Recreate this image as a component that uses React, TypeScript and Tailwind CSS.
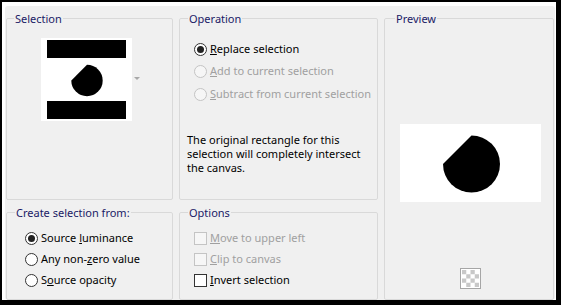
import React from "react";

function Group({
  title,
  titleClass,
  className,
  children,
}: {
  title: string;
  titleClass: string;
  className: string;
  children?: React.ReactNode;
}) {
  return (
    <div className={`relative border border-[#d9d9d9] rounded-[2px] ${className}`}>
      <span
        className={`absolute -top-[8px] ${titleClass} bg-[#f0f0f0] px-[1px] leading-[16px] text-[#1a1a66] whitespace-nowrap`}
      >
        {title}
      </span>
      {children}
    </div>
  );
}

function Radio({ checked, disabled }: { checked?: boolean; disabled?: boolean }) {
  return (
    <span
      className={`w-[13px] h-[13px] shrink-0 rounded-full border flex items-center justify-center ${
        disabled ? "border-[#c4c4c4] bg-[#f6f6f6]" : "border-[#333333] bg-white"
      }`}
    >
      {checked && <span className="w-[7px] h-[7px] rounded-full bg-[#222222]" />}
    </span>
  );
}

function Check({ disabled }: { disabled?: boolean }) {
  return (
    <span
      className={`w-[13px] h-[13px] shrink-0 border ${
        disabled ? "border-[#c4c4c4] bg-[#f6f6f6]" : "border-[#333333] bg-white"
      }`}
    />
  );
}

// chord-cut circle used by both the thumbnail and the preview
function blobPath(cx: number, cy: number, r: number) {
  return `M ${cx - r} ${cy} L ${cx} ${cy - r} A ${r} ${r} 0 1 1 ${cx - r} ${cy} Z`;
}

export default function App() {
  const dim = "text-[#a0a0a0]";

  return (
    <div className="w-[561px] h-[305px] bg-white border-t-2 border-l-2 border-r-[5px] border-b-[5px] border-black font-['Noto_Sans',sans-serif] text-[11px] text-black">
      <div className="mt-[4px] ml-[3px] mr-[1px] h-[294px] bg-[#f0f0f0] rounded-[3px] overflow-hidden pt-[12px] pl-[1px]">
        <div className="grid grid-cols-[167px_199px_170px] grid-rows-[182px_88px] gap-x-[6px] gap-y-[12px]">
          {/* Selection */}
          <Group title="Selection" titleClass="left-[7px]" className="">
            <div className="flex items-center pl-[34px] pt-[19px]">
              <svg width="91" height="83" viewBox="0 0 91 83">
                <rect width="91" height="83" fill="#ffffff" />
                <rect x="6" y="2" width="79" height="18" fill="#000" />
                <rect x="6" y="63" width="79" height="18" fill="#000" />
                <path d={blobPath(46, 42.5, 15.7)} fill="#000" />
              </svg>
              <svg width="6" height="4" viewBox="0 0 6 4" className="ml-[2px] mt-[-2px]">
                <path d="M0 0 L6 0 L3 3 Z" fill="#a8a8a8" />
              </svg>
            </div>
          </Group>

          {/* Operation */}
          <Group title="Operation" titleClass="left-[8px]" className="">
            <div className="pl-[14px] pt-[19px]">
              <div className="flex items-center h-[22px]">
                <Radio checked />
                <span className="ml-[3px]">
                  <u>R</u>eplace selection
                </span>
              </div>
              <div className="flex items-center h-[23px]">
                <Radio disabled />
                <span className={`ml-[3px] ${dim}`}>
                  <u>A</u>dd to current selection
                </span>
              </div>
              <div className="flex items-center h-[22px]">
                <Radio disabled />
                <span className={`ml-[3px] ${dim}`}>
                  <u>S</u>ubtract from current selection
                </span>
              </div>
            </div>
            <p className="pl-[7px] mt-[28px] leading-[14px]">
              The original rectangle for this
              <br />
              selection will completely intersect
              <br />
              the canvas.
            </p>
          </Group>

          {/* Preview */}
          <Group title="Preview" titleClass="left-[10px]" className="row-span-2">
            <div className="flex flex-col items-center pt-[105px] pl-[2px]">
              <svg width="141" height="78" viewBox="0 0 141 78">
                <rect width="141" height="78" fill="#ffffff" />
                <path d={blobPath(71.5, 40, 28.5)} fill="#000" />
              </svg>
              <svg width="21" height="21" viewBox="0 0 21 21" className="mt-[66px]">
                <rect x="0.5" y="0.5" width="20" height="20" fill="#ffffff" stroke="#a6a6a6" />
                {[0, 1, 2, 3].map((r) =>
                  [0, 1, 2, 3].map((c) =>
                    (r + c) % 2 === 0 ? (
                      <rect key={`${r}-${c}`} x={2 + c * 4.25} y={2 + r * 4.25} width="4.25" height="4.25" fill="#c8c8c8" />
                    ) : null
                  )
                )}
              </svg>
            </div>
          </Group>

          {/* Create selection from */}
          <Group title="Create selection from:" titleClass="left-[8px]" className="">
            <div className="pl-[18px] pt-[15px]">
              <div className="flex items-center h-[21px]">
                <Radio checked />
                <span className="ml-[3px]">
                  Source <u>l</u>uminance
                </span>
              </div>
              <div className="flex items-center h-[21px]">
                <Radio />
                <span className="ml-[3px]">
                  Any non-<u>z</u>ero value
                </span>
              </div>
              <div className="flex items-center h-[21px]">
                <Radio />
                <span className="ml-[3px]">
                  S<u>o</u>urce opacity
                </span>
              </div>
            </div>
          </Group>

          {/* Options */}
          <Group title="Options" titleClass="left-[8px]" className="">
            <div className="pl-[14px] pt-[15px]">
              <div className="flex items-center h-[21px]">
                <Check disabled />
                <span className={`ml-[3px] ${dim}`}>
                  <u>M</u>ove to upper left
                </span>
              </div>
              <div className="flex items-center h-[21px]">
                <Check disabled />
                <span className={`ml-[3px] ${dim}`}>
                  <u>C</u>lip to canvas
                </span>
              </div>
              <div className="flex items-center h-[21px]">
                <Check />
                <span className="ml-[3px]">
                  <u>I</u>nvert selection
                </span>
              </div>
            </div>
          </Group>
        </div>
      </div>
    </div>
  );
}
